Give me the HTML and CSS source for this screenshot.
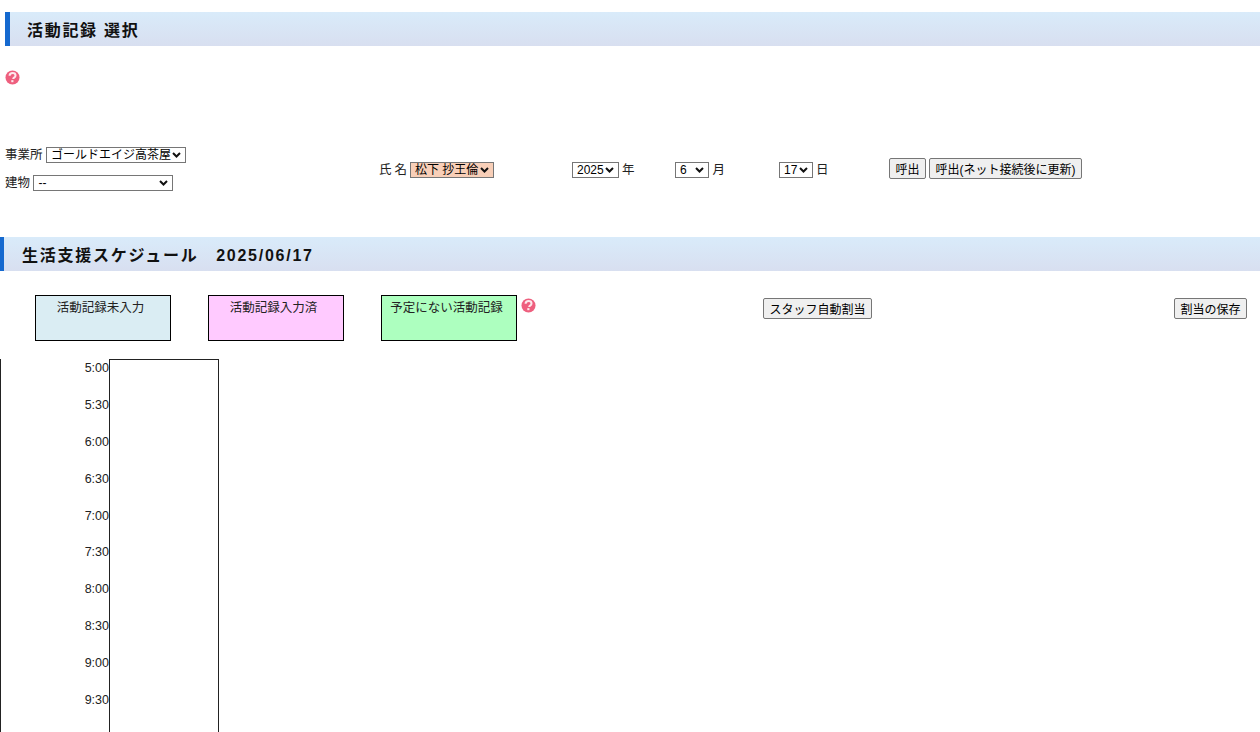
FILE: index.html
```html
<!DOCTYPE html>
<html lang="ja">
<head>
<meta charset="utf-8">
<title>活動記録 選択</title>
<link rel="stylesheet" href="styles.css">
</head>
<body>
<h2 class="title title-first">活動記録 選択</h2>
<div class="help-row">
  <svg class="help" viewBox="0 0 16 16"><circle cx="8" cy="8" r="7.5" fill="#ee5f7e"/><path d="M4.9 6.1C5 4.2 6.4 3.2 8.1 3.2c1.8 0 3.1 1.1 3.1 2.6 0 1.2-.7 1.8-1.5 2.3-.7.5-.9.8-.9 1.6" fill="none" stroke="#fde8ec" stroke-width="2.2"/><rect x="6.7" y="10.8" width="2.3" height="2.2" fill="#fde8ec"/></svg>
</div>
<form class="filter">
  <div class="cell cell-office">
    <div class="line">事業所 <select class="sel sel-office"><option>ゴールドエイジ高茶屋</option></select></div>
    <div class="line">建物 <select class="sel sel-office"><option>--</option></select></div>
  </div>
  <div class="cell cell-name">氏 名 <select class="sel sel-name"><option>松下 抄王倫</option></select></div>
  <div class="cell cell-year"><select class="sel sel-year"><option>2025</option></select> 年</div>
  <div class="cell cell-month"><select class="sel sel-short"><option>6</option><option>12</option></select> 月</div>
  <div class="cell cell-day"><select class="sel sel-short"><option>17</option></select> 日</div>
  <div class="cell cell-buttons">
    <button type="button" class="btn">呼出</button>
    <button type="button" class="btn">呼出(ネット接続後に更新)</button>
  </div>
</form>
<h2 class="title title-second">生活支援スケジュール　2025/06/17</h2>
<div class="legend">
  <div class="box box-todo">活動記録未入力</div>
  <div class="box box-done">活動記録入力済</div>
  <div class="box box-extra">予定にない活動記録</div>
  <svg class="help help-legend" viewBox="0 0 16 16"><circle cx="8" cy="8" r="7.5" fill="#ee5f7e"/><path d="M4.9 6.1C5 4.2 6.4 3.2 8.1 3.2c1.8 0 3.1 1.1 3.1 2.6 0 1.2-.7 1.8-1.5 2.3-.7.5-.9.8-.9 1.6" fill="none" stroke="#fde8ec" stroke-width="2.2"/><rect x="6.7" y="10.8" width="2.3" height="2.2" fill="#fde8ec"/></svg>
  <button type="button" class="btn btn-auto">スタッフ自動割当</button>
  <button type="button" class="btn btn-save">割当の保存</button>
</div>
<div class="schedule">
  <div class="times">
    <div class="time">5:00</div>
    <div class="time">5:30</div>
    <div class="time">6:00</div>
    <div class="time">6:30</div>
    <div class="time">7:00</div>
    <div class="time">7:30</div>
    <div class="time">8:00</div>
    <div class="time">8:30</div>
    <div class="time">9:00</div>
    <div class="time">9:30</div>
    <div class="time">10:00</div>
  </div>
  <div class="column"></div>
</div>
</body>
</html>
```
FILE: styles.css
```css
html, body {
  margin: 0;
  padding: 0;
  height: 732px;
  overflow: hidden;
  background: #fff;
}
body {
  font-family: "Liberation Sans", "Noto Sans CJK JP", sans-serif;
  font-size: 12.5px;
  color: #222;
}
.title {
  margin: 0;
  height: 34px;
  line-height: 37px;
  font-size: 16px;
  font-weight: bold;
  color: #111;
  background: linear-gradient(#d9ebfa, #d8dff0);
  box-sizing: border-box;
}
.title-first {
  margin: 12px 0 0 5px;
  border-left: 5px solid #1569cf;
  padding-left: 17px;
  letter-spacing: 1.7px;
}
.title-second {
  border-left: 4px solid #1569cf;
  padding-left: 18px;
  letter-spacing: 1.75px;
}
.help-row {
  height: 91px;
  padding: 23.5px 0 0 4.5px;
  box-sizing: border-box;
}
.help {
  display: block;
  width: 15px;
  height: 15px;
}
.filter {
  display: flex;
  align-items: center;
  height: 100px;
}
.cell {
  box-sizing: border-box;
  white-space: nowrap;
  padding-bottom: 38px;
}
.line {
  height: 28px;
  line-height: 14px;
}
.cell-office { width: 379px; padding: 10px 0 34px 5px; }
.cell-name { width: 193px; word-spacing: -0.5px; }
.cell-year { width: 103px; word-spacing: -0.5px; }
.cell-month { width: 104px; }
.cell-day { width: 110px; word-spacing: -0.5px; }
.cell-buttons { display: flex; gap: 3px; }
.sel {
  appearance: none;
  font-family: inherit;
  font-size: 12px;
  height: 16px;
  padding: 0 12px 0 4px;
  box-sizing: border-box;
  color: #000;
  border: 1px solid #767676;
  border-radius: 0;
  vertical-align: baseline;
  background: #fff url("data:image/svg+xml,%3Csvg xmlns='http://www.w3.org/2000/svg' width='9' height='6' viewBox='0 0 9 6'%3E%3Cpath d='M1 1l3.5 3.5L8 1' fill='none' stroke='%23111' stroke-width='2'/%3E%3C/svg%3E") no-repeat right 4px center;
}
.sel-office { width: 140px; }
.sel-name { width: 84px; background-color: #f8cfb8; }
.sel-year { width: 47px; }
.sel-short { width: 34px; }
.btn {
  font-family: inherit;
  font-size: 12px;
  height: 21px;
  padding: 0 5.5px;
  box-sizing: border-box;
  background: #efefef;
  color: #000;
  border: 1px solid #767676;
  border-radius: 2px;
}
.legend {
  display: flex;
  align-items: flex-start;
  padding: 24px 13px 18px 35px;
}
.box {
  box-sizing: border-box;
  width: 136px;
  height: 46px;
  border: 1px solid #000;
  padding: 4px 5px 0 0;
  text-align: center;
  margin-right: 37px;
  line-height: 16px;
}
.box-todo { background: #daedf3; }
.box-done { background: #ffcaff; }
.box-extra { background: #adffbf; margin-right: 4px; }
.help-legend { margin-top: 3px; }
.btn-auto { margin: 3px 0 0 227px; }
.btn-save { margin: 3px 0 0 auto; }
.schedule {
  display: flex;
  align-items: flex-start;
  border-left: 1px solid #222;
}
.times { width: 108px; }
.time {
  height: 36.9px;
  line-height: 18px;
  text-align: right;
}
.column {
  box-sizing: border-box;
  width: 110px;
  height: 500px;
  border: 1px solid #222;
}
```
